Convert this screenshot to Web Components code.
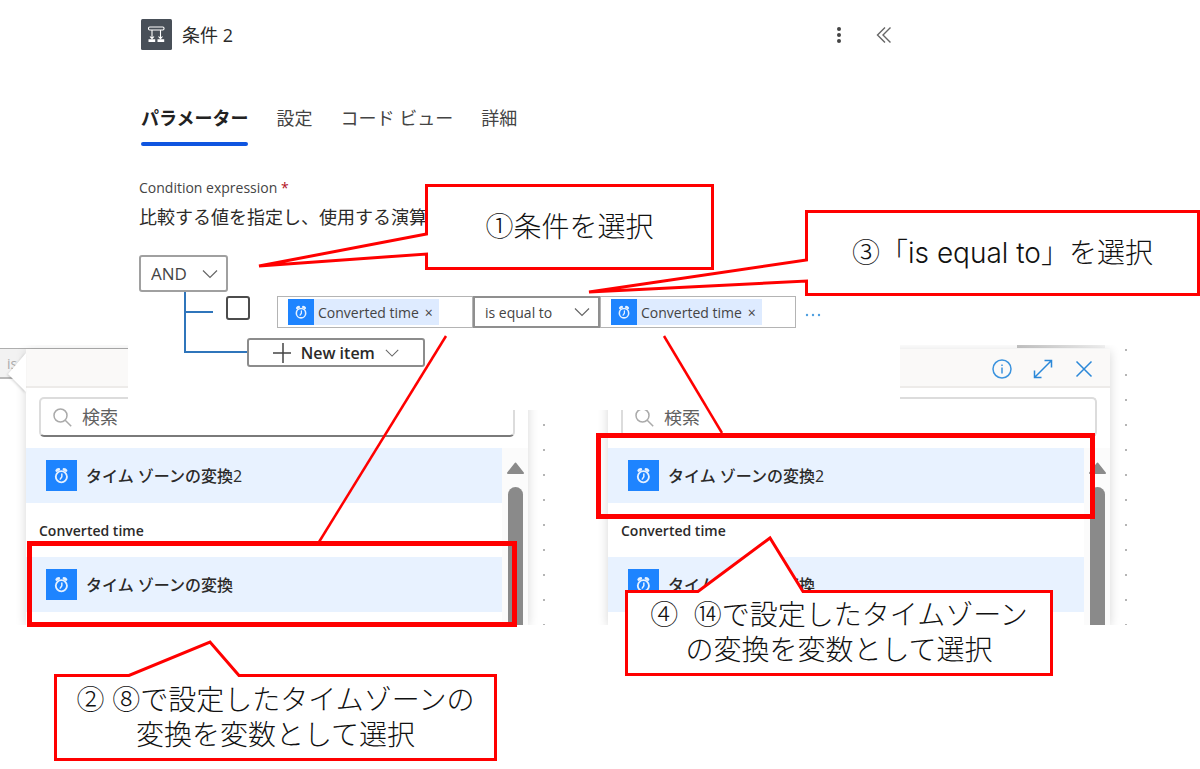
<!DOCTYPE html>
<html lang="ja">
<head>
<meta charset="utf-8">
<title>条件 2</title>
<meta name="viewport" content="width=device-width, initial-scale=1">
<style>
  :root {
    --ui: "Open Sans", "Noto Sans CJK JP", sans-serif;
    --note: "Liberation Sans", "Noto Sans CJK JP", sans-serif;
    --red: #f00;
    --blue: #1e84ff;
    --tint: #e8f2ff;
    --line: #8c8c8c;
    --dark: #2b2a29;
  }
  body {
    margin: 0;
    background: #fff;
    color: var(--dark);
    font-family: var(--ui);
  }
  .latin {
    font-family: Inter, sans-serif;
  }
</style>
</head>
<body>
<guide-board>
  <condition-panel slot="panel">
    <span slot="title">条件 2</span>
  </condition-panel>
  <token-picker slot="pickers" variant="left"></token-picker>
  <token-picker slot="pickers" variant="right"></token-picker>

  <guide-mark slot="notes" style="left:27px;top:541px;width:480px;height:76px"></guide-mark>
  <guide-mark slot="notes" style="left:596px;top:433px;width:489px;height:76px"></guide-mark>
  <guide-line slot="notes" from="446,336" to="319,542"></guide-line>
  <guide-line slot="notes" from="664,336" to="722,433"></guide-line>

  <guide-callout slot="notes" style="left:425px;top:184px;width:289px;height:86px" side="left" tail="50,-166,82,70">①条件を選択</guide-callout>
  <guide-callout slot="notes" style="left:805px;top:210px;width:395px;height:86px" side="left" tail="50,-216,82,71">③「<span class="latin">is equal to</span>」を選択</guide-callout>
  <guide-callout slot="notes" style="left:54px;top:674px;width:443px;height:87px" side="top" tail="75,156,-32,185">② ⑧で設定したタイムゾーンの<br>変換を変数として選択</guide-callout>
  <guide-callout slot="notes" style="left:625px;top:590px;width:428px;height:86px" side="top" tail="73,145,-52,178">④&nbsp;&nbsp;⑭で設定したタイムゾーン<br>の変換を変数として選択</guide-callout>
</guide-board>

<script>
const chevron = `<svg class="chevron" width="16" height="10" viewBox="0 0 16 10" fill="none" stroke="#666" stroke-width="1.2"><path d="M1 1.5l7 7 7-7"/></svg>`

class GuideBoard extends HTMLElement {
  constructor() {
    super()
    this.attachShadow({ mode: 'open' })
    this.shadowRoot.innerHTML = `
      <style>
        :host {
          display: grid;
          position: relative;
          grid-template-columns: 128px minmax(0, 1fr) 300px;
          grid-template-rows: 345px 65px auto;
          padding-bottom: 144px;
          box-sizing: border-box;
          overflow: hidden;
        }
        .panel {
          grid-area: 1 / 2 / 3 / 3;
          z-index: 1;
          display: grid;
          background: #fff;
        }
        .pickers {
          grid-area: 2 / 1 / 4 / 4;
          display: grid;
          grid-template-columns: repeat(2, minmax(0, 1fr));
          gap: 35px;
          padding-right: 71px;
        }
        .notes {
          position: absolute;
          inset: 0;
          z-index: 2;
          pointer-events: none;
        }
      </style>
      <div class="panel"><slot name="panel"></slot></div>
      <div class="pickers"><slot name="pickers"></slot></div>
      <div class="notes"><slot name="notes"></slot></div>
    `
  }
}
customElements.define('guide-board', GuideBoard)

class AlarmIcon extends HTMLElement {
  constructor() {
    super()
    this.attachShadow({ mode: 'open' })
    this.shadowRoot.innerHTML = `
      <style>
        :host {
          display: grid;
          place-items: center;
          flex: none;
          width: var(--size, 31px);
          height: var(--size, 31px);
          background: var(--blue);
        }
        svg {
          width: 54%;
          height: 54%;
        }
      </style>
      <svg viewBox="0 0 18 18" fill="none" stroke="#e6f1ff" stroke-linecap="round">
        <circle cx="9" cy="10.5" r="6" stroke-width="2"/>
        <path d="M9.500 7.500V10.500L7.800 13" stroke-width="1.600"/>
        <path d="M4 3.800C4.400 3 5.200 2.600 6.200 2.600M14 3.800C13.600 3 12.800 2.600 11.800 2.600" stroke-width="3"/>
      </svg>
    `
  }
}
customElements.define('alarm-icon', AlarmIcon)

class TokenField extends HTMLElement {
  constructor() {
    super()
    this.attachShadow({ mode: 'open' })
    this.shadowRoot.innerHTML = `
      <style>
        :host {
          display: flex;
          align-items: flex-start;
          flex: 1;
          min-width: 0;
          height: 32px;
          padding: 2px 10px;
          box-sizing: border-box;
          border: 1px solid #b4b4b4;
        }
        .token {
          display: flex;
          align-items: center;
          height: 26px;
          background: #deebff;
          color: #444;
          font-size: 14px;
          white-space: nowrap;
        }
        alarm-icon {
          --size: 26px;
          margin-right: 4px;
        }
        button {
          width: 20px;
          height: 26px;
          margin: 0;
          padding: 0;
          border: 0;
          background: none;
          color: #444;
          font: 14px var(--ui);
        }
      </style>
      <div class="token">
        <alarm-icon></alarm-icon><slot></slot><button aria-label="削除">×</button>
      </div>
    `
  }
}
customElements.define('token-field', TokenField)

class ConditionPanel extends HTMLElement {
  constructor() {
    super()
    this.attachShadow({ mode: 'open' })
    this.shadowRoot.innerHTML = `
      <style>
        :host {
          display: block;
          padding: 19px 0 0 11px;
        }
        button, select, input {
          margin: 0;
          font-family: inherit;
          color: inherit;
          box-sizing: border-box;
        }
        button {
          padding: 0;
          border: 0;
          background: none;
        }
        header {
          display: flex;
          align-items: center;
          gap: 10px;
          height: 31px;
          padding: 0 5px 0 2px;
        }
        h1 {
          flex: 1;
          margin: 0;
          font: 400 18px/24px var(--ui);
        }
        .logo {
          width: 31px;
          height: 31px;
        }
        header button {
          display: grid;
          place-items: center;
          width: 22px;
          height: 24px;
        }
        header button + button {
          margin-left: 13px;
        }
        nav {
          display: flex;
          gap: 28px;
          margin-top: 56px;
          padding-left: 2px;
        }
        nav button {
          font-size: 18px;
          line-height: 24px;
          color: #444;
          white-space: nowrap;
        }
        nav button::after {
          content: "";
          display: block;
          height: 4px;
          margin-top: 12px;
          border-radius: 2px;
        }
        nav button[aria-selected="true"] {
          font-weight: 700;
          color: #222;
        }
        nav button[aria-selected="true"]::after {
          background: #0f55e0;
        }
        .label {
          display: block;
          margin-top: 32px;
          font-size: 14px;
          line-height: 20px;
          color: #444;
        }
        .label b {
          color: #b10e1c;
          font-weight: 400;
        }
        p {
          margin: 7px 0 0;
          font-size: 18px;
          line-height: 24px;
          white-space: nowrap;
          overflow: hidden;
        }
        .pick {
          display: inline-grid;
          align-items: center;
        }
        .pick > * {
          grid-area: 1 / 1;
        }
        .pick .chevron {
          justify-self: end;
          margin-right: 10px;
          pointer-events: none;
        }
        select {
          appearance: none;
          width: 100%;
          height: 100%;
          padding: 0 0 0 10px;
          border: 2px solid #a0a0a0;
          border-radius: 3px;
          background: #fff;
          color: #444;
          outline: none;
        }
        .logic {
          display: grid;
          width: 89px;
          height: 37px;
          margin-top: 26px;
        }
        .logic select {
          font-size: 17px;
        }
        .tree {
          display: grid;
          grid-template-columns: 42px minmax(0, 1fr);
          margin: 0 78px 0 45px;
        }
        .rail {
          grid-row: 1 / 3;
          overflow: visible;
        }
        .row {
          display: flex;
          align-items: flex-start;
          padding-top: 4px;
        }
        .row input {
          appearance: none;
          flex: none;
          width: 24px;
          height: 24px;
          margin-right: 27px;
          border: 2px solid #4c4c4c;
          border-radius: 3px;
          background: #fff;
        }
        .compare {
          display: flex;
          flex: 1;
          min-width: 0;
        }
        .compare .pick {
          width: 127px;
          height: 32px;
          flex: none;
        }
        .compare select {
          font-size: 14px;
          border-radius: 0;
          border-color: #8f8f8f;
        }
        .more {
          width: 18px;
          height: 32px;
          margin-left: 8px;
        }
        .add {
          display: flex;
          align-items: center;
          width: 178px;
          height: 29px;
          margin: 10px 0 0 21px;
          padding: 0 24px;
          border: 2px solid var(--line);
          border-radius: 3px;
          background: #fff;
          font-size: 16px;
          font-weight: 600;
          white-space: nowrap;
        }
        .add .chevron {
          margin-left: 10px;
        }
        .plus {
          margin-right: 10px;
        }
      </style>
      <header>
        <svg class="logo" viewBox="0 0 31 31">
          <rect width="31" height="31" rx="1.5" fill="#484f58"/>
          <g fill="none" stroke="#fff" stroke-width="1.1">
            <rect x="7.500" y="8" width="15.500" height="3" rx="1.200"/>
            <path d="M11 11v9M19.500 11v9M9 17.500l2 2.200 2-2.200M17.500 17.500l2 2.200 2-2.200"/>
          </g>
          <path d="M7.500 20.200h6.700v2.800H7.500zM16.500 20.200h6.700v2.800h-6.700z" fill="#fff"/>
        </svg>
        <h1><slot name="title"></slot></h1>
        <button aria-label="その他">
          <svg width="6" height="18" viewBox="0 0 6 18" fill="#444"><circle cx="3" cy="3" r="2"/><circle cx="3" cy="9" r="2"/><circle cx="3" cy="15" r="2"/></svg>
        </button>
        <button aria-label="折りたたむ">
          <svg width="16" height="18" viewBox="0 0 16 18" fill="none" stroke="#666" stroke-width="1.4"><path d="M9 1.500L1.500 9 9 16.500M14.500 1.500L7 9l7.500 7.500"/></svg>
        </button>
      </header>
      <nav role="tablist">
        <button role="tab" aria-selected="true">パラメーター</button>
        <button role="tab">設定</button>
        <button role="tab">コード ビュー</button>
        <button role="tab">詳細</button>
      </nav>
      <label class="label" for="logic">Condition expression <b>*</b></label>
      <p>比較する値を指定し、使用する演算子</p>
      <div class="logic pick">
        <select id="logic"><option>AND</option><option>OR</option></select>
        ${chevron}
      </div>
      <div class="tree">
        <svg class="rail" width="42" height="61" fill="none" stroke="#2f75bb" stroke-width="2">
          <path d="M1 0v60h63M1 20h28"/>
        </svg>
        <div class="row">
          <input type="checkbox" aria-label="行を選択">
          <div class="compare">
            <token-field>Converted time</token-field>
            <div class="pick">
              <select aria-label="演算子"><option>is equal to</option></select>
              ${chevron}
            </div>
            <token-field>Converted time</token-field>
          </div>
          <button class="more" aria-label="メニュー">
            <svg width="18" height="4" fill="#4f9fe0"><circle cx="3" cy="2" r="1.200"/><circle cx="9" cy="2" r="1.200"/><circle cx="15" cy="2" r="1.200"/></svg>
          </button>
        </div>
        <button class="add">
          <svg class="plus" width="20" height="20" fill="none" stroke="#444" stroke-width="1.500"><path d="M0 10h20M10 0v20"/></svg>
          New item
          ${chevron}
        </button>
      </div>
    `
  }
}
customElements.define('condition-panel', ConditionPanel)

class TokenPicker extends HTMLElement {
  constructor() {
    super()
    this.attachShadow({ mode: 'open' })
    this.shadowRoot.innerHTML = `
      <style>
        :host {
          display: grid;
          grid-template-columns: 26px minmax(0, 1fr) 19px;
          grid-template-rows: 4px auto;
          overflow: hidden;
          min-width: 0;
        }
        .edge {
          grid-column: 1 / 4;
          box-sizing: border-box;
        }
        :host([variant="left"]) .edge {
          border-bottom: 1px solid #aeaeae;
        }
        :host([variant="right"]) .edge {
          width: 88px;
          height: 3px;
          margin-right: 24px;
          justify-self: end;
          background: linear-gradient(90deg, #c4c4c4, #f4f4f4);
        }
        .under {
          grid-area: 2 / 1;
          height: 30px;
          box-sizing: border-box;
          padding-left: 7px;
          border-bottom: 2px solid #b8b8b8;
          background: #f2f2f2;
          color: #aaa;
          font-size: 14px;
          line-height: 30px;
        }
        :host([variant="right"]) .under {
          visibility: hidden;
        }
        .beak {
          grid-area: 2 / 1;
          z-index: 1;
          margin: 4px 0 0 8px;
          filter: drop-shadow(-1px 1px 1px rgba(0, 0, 0, 0.15));
        }
        :host([variant="right"]) .beak {
          display: none;
        }
        .dots {
          grid-area: 2 / 3;
          background: radial-gradient(circle at 16px 1px, #b5b5b5 1px, transparent 1px) 0 0 / 19px 25px;
        }
        .popup {
          grid-area: 2 / 2;
          height: 276px;
          background: #fff;
          box-shadow: 0 2px 10px rgba(0, 0, 0, 0.16);
        }
        .bar {
          display: flex;
          justify-content: flex-end;
          align-items: center;
          gap: 18px;
          height: 39px;
          padding: 2px 15px 0 0;
          box-sizing: border-box;
          border-bottom: 2px solid #edebe9;
          background: #faf9f8;
        }
        .bar button {
          display: grid;
          place-items: center;
          width: 23px;
          height: 24px;
          padding: 0;
          border: 0;
          background: none;
        }
        .search {
          display: flex;
          align-items: center;
          gap: 10px;
          height: 40px;
          margin: 9px 13px 11px;
          padding: 0 12px;
          box-sizing: border-box;
          border: 2px solid #dcdcdc;
          border-bottom-color: #7a7a7a;
          border-radius: 5px;
        }
        input {
          flex: 1;
          min-width: 0;
          padding: 0;
          border: 0;
          outline: 0;
          background: none;
          font: 18px/24px var(--ui);
        }
        input::placeholder {
          color: #616161;
        }
        .body {
          display: grid;
          grid-template-columns: minmax(0, 1fr) 26px;
        }
        .item {
          display: flex;
          align-items: center;
          gap: 9px;
          height: 55px;
          padding-left: 20px;
          background: var(--tint);
          font: 500 16px/24px var(--ui);
          white-space: nowrap;
        }
        h2 {
          margin: 0;
          padding: 18px 0 16px 13px;
          font: 600 14px/20px var(--ui);
        }
        .scroll {
          display: grid;
          grid-template-rows: 11px 1fr;
          gap: 14px;
          justify-items: center;
          padding-top: 14px;
          height: 177px;
          box-sizing: border-box;
          background: #fbfbfb;
        }
        .thumb {
          width: 15px;
          border-radius: 8px 8px 0 0;
          background: #8a8a8a;
        }
      </style>
      <div class="edge"></div>
      <div class="under">is</div>
      <svg class="beak" width="18" height="39" viewBox="0 0 18 39" fill="#fff"><path d="M18 0v39L0 21z"/></svg>
      <div class="dots"></div>
      <section class="popup">
        <div class="bar">
          <button aria-label="情報"><svg width="22" height="22" viewBox="0 0 22 22" fill="none" stroke="#3b93de" stroke-width="1.500"><circle cx="11" cy="11" r="9"/><path d="M11 9.500v6M11 6.500v1.600"/></svg></button>
          <button aria-label="展開"><svg width="20" height="20" viewBox="0 0 20 20" fill="none" stroke="#2b88d8" stroke-width="1.500"><path d="M1.500 18.500l17-17M11.500 1.500h7v7M1.500 11.500v7h7"/></svg></button>
          <button aria-label="閉じる"><svg width="18" height="18" viewBox="0 0 18 18" fill="none" stroke="#2b88d8" stroke-width="1.500"><path d="M1.500 1.500l15 15M16.500 1.500l-15 15"/></svg></button>
        </div>
        <label class="search">
          <svg width="19" height="19" viewBox="0 0 19 19" fill="none" stroke="#aaa" stroke-width="1.500"><circle cx="7.500" cy="7.500" r="6.500"/><path d="M12.200 12.200l6 6"/></svg>
          <input type="text" placeholder="検索" aria-label="検索">
        </label>
        <div class="body">
          <div>
            <div class="item"><alarm-icon></alarm-icon>タイム ゾーンの変換2</div>
            <h2>Converted time</h2>
            <div class="item"><alarm-icon></alarm-icon>タイム ゾーンの変換</div>
          </div>
          <div class="scroll">
            <svg width="17" height="12" viewBox="0 0 17 12" fill="#8a8a8a" stroke="#8a8a8a" stroke-width="2" stroke-linejoin="round"><path d="M8.500 1.500L16 11H1z"/></svg>
            <div class="thumb"></div>
          </div>
        </div>
      </section>
    `
  }
}
customElements.define('token-picker', TokenPicker)

// thick frame around a list entry
class GuideMark extends HTMLElement {
  constructor() {
    super()
    this.attachShadow({ mode: 'open' })
    this.shadowRoot.innerHTML = `
      <style>
        :host {
          display: block;
          position: absolute;
          border: 5px solid var(--red);
        }
      </style>
    `
  }
}
customElements.define('guide-mark', GuideMark)

class GuideLine extends HTMLElement {
  connectedCallback() {
    const [x1, y1] = this.getAttribute('from').split(',')
    const [x2, y2] = this.getAttribute('to').split(',')
    this.attachShadow({ mode: 'open' })
    this.shadowRoot.innerHTML = `
      <style>
        :host {
          display: block;
          position: absolute;
          inset: 0;
        }
        svg {
          width: 100%;
          height: 100%;
        }
      </style>
      <svg stroke="#f00" stroke-width="2.500"><line x1="${x1}" y1="${y1}" x2="${x2}" y2="${y2}"/></svg>
    `
  }
}
customElements.define('guide-line', GuideLine)

class GuideCallout extends HTMLElement {
  connectedCallback() {
    this.attachShadow({ mode: 'open' })
    this.shadowRoot.innerHTML = `
      <style>
        :host {
          display: grid;
          place-items: center;
          position: absolute;
          color: #111;
          font: 300 28px/35px var(--note);
          text-align: center;
          white-space: nowrap;
        }
        svg {
          position: absolute;
          inset: 0;
          overflow: visible;
          width: 100%;
          height: 100%;
        }
        div {
          position: relative;
        }
      </style>
      <svg fill="#fff" stroke="#f00" stroke-width="3"><path d="${this.outline()}"/></svg>
      <div><slot></slot></div>
    `
  }

  // tail: start on the edge, tip x, tip y, end on the edge
  outline() {
    const [a, tipX, tipY, b] = this.getAttribute('tail').split(',').map(Number)
    const l = 1.5
    const w = parseInt(this.style.width) - l
    const h = parseInt(this.style.height) - l
    if (this.getAttribute('side') === 'left') {
      return `M${l} ${l}H${w}V${h}H${l}V${b}L${tipX} ${tipY}L${l} ${a}Z`
    }
    return `M${l} ${l}H${a}L${tipX} ${tipY}L${b} ${l}H${w}V${h}H${l}Z`
  }
}
customElements.define('guide-callout', GuideCallout)
</script>
</body>
</html>
